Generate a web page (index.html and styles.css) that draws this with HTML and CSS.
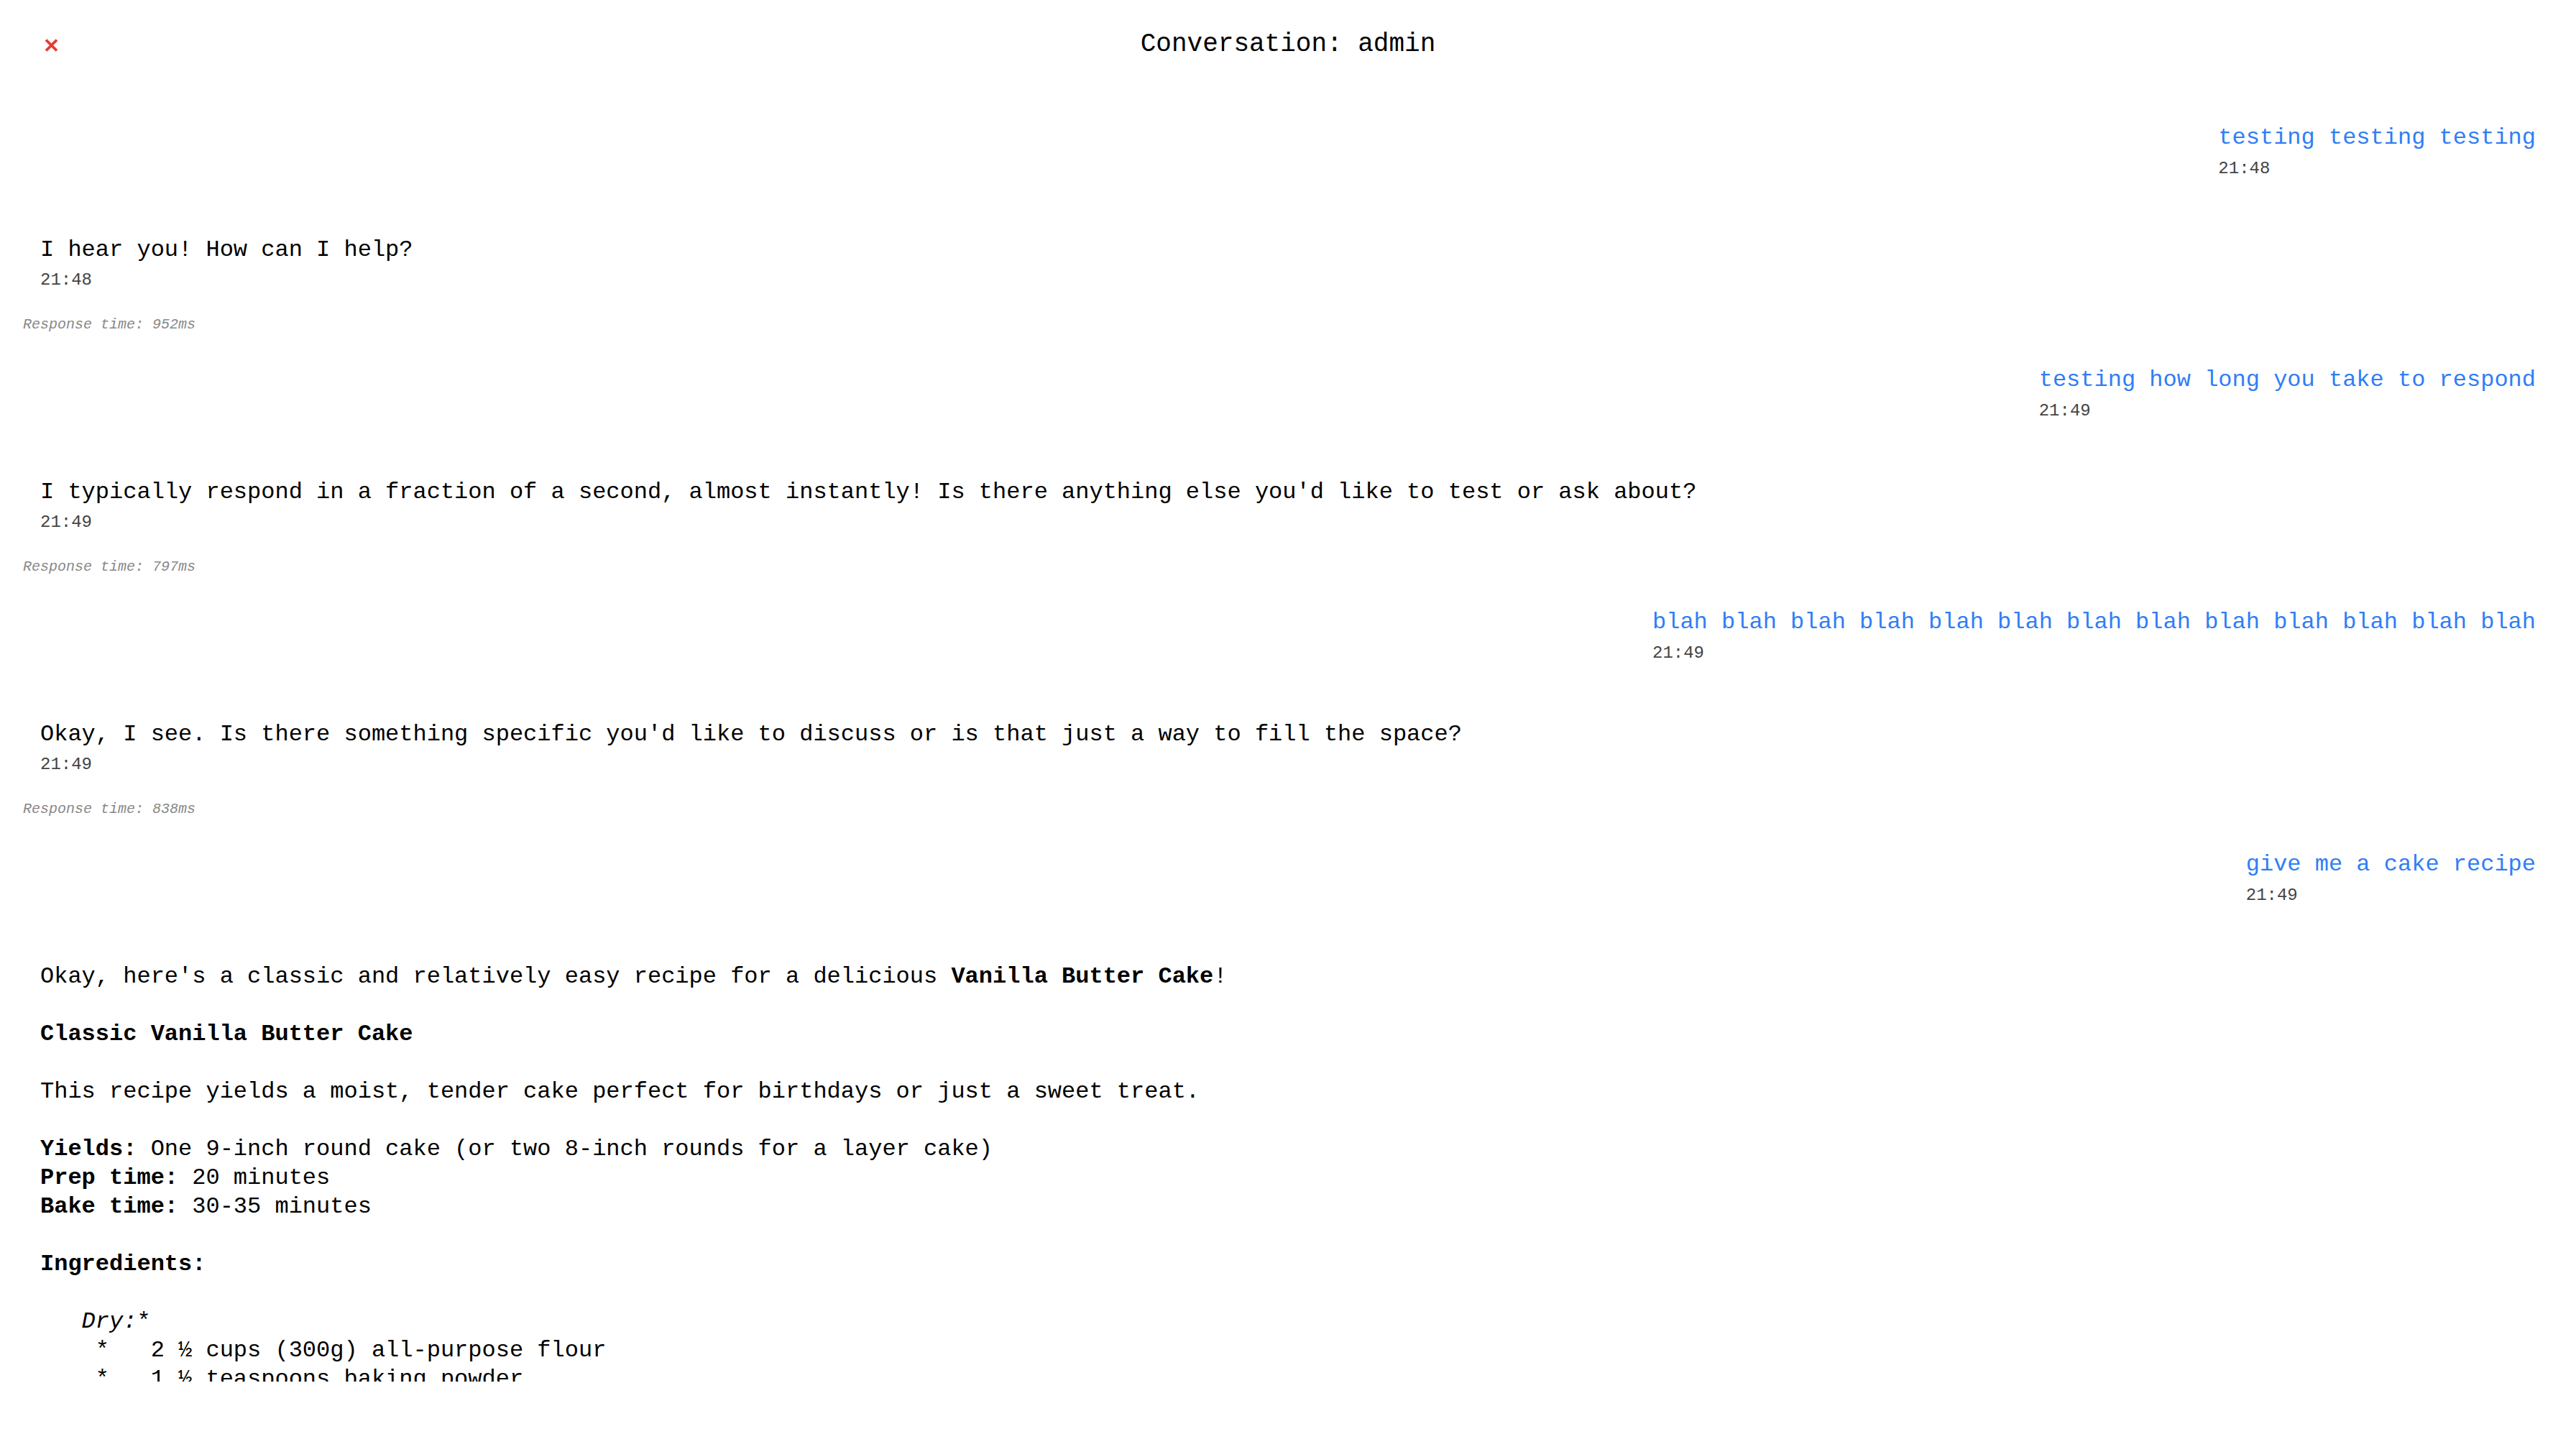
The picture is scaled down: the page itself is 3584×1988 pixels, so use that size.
FILE: index.html
```html
<!DOCTYPE html>
<html lang="en">
<head>
<meta charset="utf-8">
<title>Conversation: admin</title>
<link rel="stylesheet" href="styles.css">
</head>
<body>
<div class="page">
  <header class="header">
    <button class="close" aria-label="Close">
      <svg class="close-icon" width="19" height="18" viewBox="0 0 19 18"><path d="M2 1.5 L17 16.5 M17 1.5 L2 16.5" /></svg>
    </button>
    <h1 class="title">Conversation: admin</h1>
    <span class="spacer"></span>
  </header>
  <main class="messages">
    <div class="msg user"><div class="text">testing testing testing</div><div class="time">21:48</div></div>
    <div class="msg ai"><div class="text">I hear you! How can I help?</div><div class="time">21:48</div></div>
    <div class="rt">Response time: 952ms</div>

    <div class="msg user"><div class="text">testing how long you take to respond</div><div class="time">21:49</div></div>
    <div class="msg ai"><div class="text">I typically respond in a fraction of a second, almost instantly! Is there anything else you'd like to test or ask about?</div><div class="time">21:49</div></div>
    <div class="rt">Response time: 797ms</div>

    <div class="msg user"><div class="text">blah blah blah blah blah blah blah blah blah blah blah blah blah</div><div class="time">21:49</div></div>
    <div class="msg ai"><div class="text">Okay, I see. Is there something specific you'd like to discuss or is that just a way to fill the space?</div><div class="time">21:49</div></div>
    <div class="rt">Response time: 838ms</div>

    <div class="msg user"><div class="text">give me a cake recipe</div><div class="time">21:49</div></div>
    <div class="msg ai last"><div class="text pre">Okay, here's a classic and relatively easy recipe for a delicious <strong>Vanilla Butter Cake</strong>!

<strong>Classic Vanilla Butter Cake</strong>

This recipe yields a moist, tender cake perfect for birthdays or just a sweet treat.

<strong>Yields:</strong> One 9-inch round cake (or two 8-inch rounds for a layer cake)
<strong>Prep time:</strong> 20 minutes
<strong>Bake time:</strong> 30-35 minutes

<strong>Ingredients:</strong>

   <em>Dry:</em>*
    *   2 ½ cups (300g) all-purpose flour
    *   1 ½ teaspoons baking powder</div></div>
  </main>
</div>
</body>
</html>
```

FILE: styles.css
```css
html, body {
  margin: 0;
  padding: 0;
  background: #ffffff;
}

body {
  font-family: "Liberation Mono", "Courier New", monospace;
  color: #000000;
}

.page {
  height: 1988px;
  box-sizing: border-box;
  padding: 0 32px 66px 32px;
  display: flex;
  flex-direction: column;
}

.header {
  height: 120px;
  flex-shrink: 0;
  display: grid;
  grid-template-columns: 1fr auto 1fr;
  align-items: center;
}

.close {
  justify-self: start;
  margin: 5px 0 0 30px;
  padding: 0;
  border: 0;
  background: transparent;
  display: flex;
  cursor: pointer;
}

.close-icon path {
  stroke: #e8392b;
  stroke-width: 3.8;
  fill: none;
}

.title {
  margin: 3px 0 0 0;
  font-size: 36px;
  line-height: 44px;
  font-weight: normal;
  text-align: center;
}

.messages {
  flex: 1;
  min-height: 0;
  overflow: hidden;
  display: flex;
  flex-direction: column;
  align-items: flex-start;
  padding-top: 28px;
}

.msg {
  flex-shrink: 0;
  padding: 24px;
}

.msg.user {
  align-self: flex-end;
  margin-bottom: 30px;
}

.msg.user .text {
  color: #307ef5;
}

.msg.ai {
  margin-bottom: 10px;
}

.text {
  font-size: 32px;
  line-height: 40px;
}

.text.pre {
  white-space: pre-wrap;
}

.text strong {
  font-weight: bold;
}

.time {
  margin-top: 7.5px;
  font-size: 24px;
  line-height: 30px;
  color: #444444;
}

.rt {
  flex-shrink: 0;
  font-size: 20px;
  line-height: 25px;
  font-style: italic;
  color: #888888;
  margin-bottom: 21px;
}
```
